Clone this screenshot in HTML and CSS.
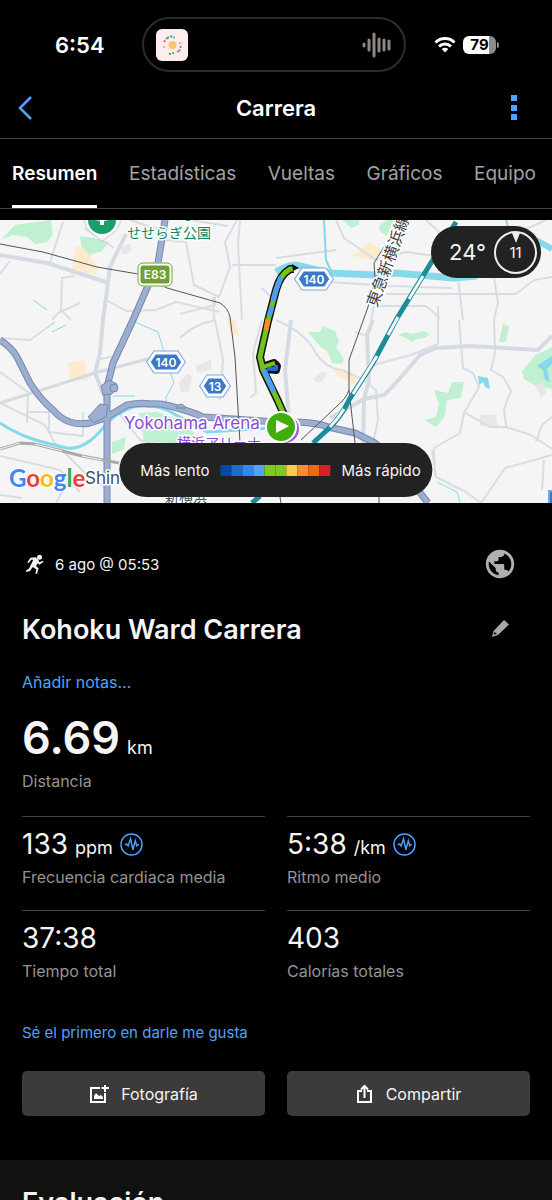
FILE: index.html
```html
<!DOCTYPE html>
<html lang="es">
<head>
    <meta charset="UTF-8">
    <meta name="viewport" content="width=device-width, initial-scale=1.0">
    <title>Carrera</title>
    <link rel="stylesheet" href="styles.css">
</head>
<body>
    <div class="app">
        <!-- Status bar -->
        <div class="status-bar">
            <span class="time">6:54</span>
            <div class="island">
                <svg class="app-icon" viewBox="0 0 32 32">
                    <rect width="32" height="32" rx="6" fill="#fdeeed"/>
                    <circle cx="16.500" cy="16" r="4" fill="#f9c56a"/>
                    <g fill="none" stroke-width="2" stroke-dasharray="2 1.500">
                        <path d="M8 13l3-4" stroke="#c0705c"/>
                        <path d="M11 9l5-2" stroke="#3f9d93"/>
                        <path d="M17 9l3-2" stroke="#59b6de"/>
                        <path d="M23 14h4" stroke="#ef9fc0"/>
                        <path d="M25 17l-2 6" stroke="#50a3b5"/>
                        <path d="M21 22l3 2" stroke="#d5764e"/>
                        <path d="M13 25l5-1" stroke="#3d9b78"/>
                        <path d="M7 18h3" stroke="#efa6b8"/>
                    </g>
                </svg>
                <svg class="wave" viewBox="0 0 30 26" stroke="#8f8783" stroke-width="3" stroke-linecap="round">
                    <path d="M2 12v2M7 8v10M12 2v22M17 7v12M22 8v10M27 9v8"/>
                </svg>
            </div>
            <div class="indicators">
                <svg class="wifi" viewBox="0 0 22 17">
                    <g fill="none" stroke="#fff" stroke-width="3">
                        <path d="M1.500 6.500a13.500 13.500 0 0 1 19 0"/>
                        <path d="M5 10.500a8.500 8.500 0 0 1 12 0"/>
                    </g>
                    <path d="M7.800 13a4.600 4.600 0 0 1 6.400 0L11 16.500z" fill="#fff"/>
                </svg>
                <span class="battery">79</span>
            </div>
        </div>

        <header class="header">
            <button class="icon-btn" aria-label="Volver">
                <svg width="16" height="24" viewBox="0 0 16 24"><path d="M13 1L2 12l11 11" fill="none" stroke="#4da3ff" stroke-width="2.500"/></svg>
            </button>
            <h1>Carrera</h1>
            <button class="icon-btn" aria-label="Más opciones">
                <svg width="6" height="26" viewBox="0 0 6 26" fill="#4da3ff"><path d="M0 0h6v6H0zM0 10h6v6H0zM0 19h6v6H0z"/></svg>
            </button>
        </header>

        <nav class="tabs">
            <a href="#" class="active">Resumen</a>
            <a href="#">Estadísticas</a>
            <a href="#">Vueltas</a>
            <a href="#">Gráficos</a>
            <a href="#">Equipo</a>
        </nav>

        <main>
            <!-- Route map -->
            <div class="map">
                <svg class="map-canvas" viewBox="0 0 552 283" preserveAspectRatio="xMidYMid slice">
                    <rect width="552" height="283" fill="#f5f5f6"/>

                    <!-- parks and built-up areas -->
                    <g fill="#bff0d2">
                        <path d="M1 20l14-15 14-2 22-3 2 14-6 8-12 2-8-7-14-2z"/>
                        <path d="M80 16l14 2 15 4-8 10-10 2-2 8-6-4z"/>
                        <path d="M139 193l18-1 24 9 13 12-4 12-46-4z"/>
                        <path d="M112 222l14-5-2 12-12 5z"/>
                        <path d="M308 112l12 0 3-6 12 5 4 10-3 6 8 12-2 5-10-1-4-11-8-6z"/>
                        <path d="M398 115l8-3 6 2 12-3 6 3-6 4-8 1-4 3-6-4z"/>
                        <path d="M343 0h16l0 5-8 3zM379 6l8-6h6l-6 16-7-5z"/>
                        <path d="M503 104l6 2-3 16-7 0z"/>
                        <path d="M522 151l14-16 16-8v42l-18-4-10-6z"/>
                        <path d="M434 170l14 3 4-11 12 0-3 16-14 2-2 16-9 11-12-7 12-3 3-13z"/>
                    </g>
                    <g fill="#fbeacc">
                        <path d="M76 26l9 3 13 18-2 8-24-6z"/>
                        <path d="M68 143l16-3 4 20-18 1z"/>
                        <path d="M352 36l18-13 13 7-10 10z"/>
                        <path d="M332 150l23 3 2 14-14-8z"/>
                        <path d="M226 96l9 4 4 16-9-4z"/>
                    </g>
                    <g fill="#e9e6e8">
                        <path d="M121 27l10-4 0 9-8 3zM179 162l8-8 5 3-3 14-8 2zM196 146l15-6v9l-14 4zM313 160l9-9 6 3-8 9zM480 195l16 0 2 11h-18zM535 166l8-4 4 11-6 4z"/>
                    </g>

                    <!-- streets -->
                    <g fill="none" stroke="#d8dde4" stroke-width="2" stroke-linejoin="round">
                        <path d="M63 2L50 42M0 54l10-13M75 56l-13 2-1 32 10 10M80 83l-22 10-6 7M108 81l18 10 30-1 20-8 44 10"/>
                        <path d="M164 20l22 2 8 43 25 12 11-30-5-25 13-24M240 0l-2 25 4 75M232 45h44M130 0l30 10M84 8l30 20"/>
                        <path d="M0 183l45 22 10 18 35 35 17 10M27 203V192h22v20l34 4v-24M0 236l60 14 20 22M70 257l-14 26M0 275l22 3"/>
                        <path d="M0 118l30 2 25-18M0 152l28 20-1 30M180 118q14-14 36-18M262 100l-9 33 3 40 -6 5M215 100l8 40-3 40M118 192l22 28 50 12"/>
                        <path d="M336 0l8 18 32 22 30-8 30 4M276 38l60-8M330 62l60 4 62 2M376 72l-5 30M376 86h50l14 12M386 74h130l18-14 18-3M426 0l38 35M438 86v14M458 58l5 42M494 57l4 26-4 17"/>
                        <path d="M276 100q28 12 38 30t28 20l22 10 12 10 2 30-5 23M355 112l12 4M459 100l4 48 10 5 6 14-15 26-4 20-26 15 1 27M464 192l26 15 16 0 25 8 21 14M494 100l1 32-4 18 12 7 8 14-7 18 2 17M432 230l4 27 30 15 15 11M481 283l24-35 36-10 11-3M536 222l6-17 10-8M544 240l-2 30M373 145l38-10 27-11v-24"/>
                        <path d="M215 77v8l-35 9M213 77l1 23M120 135l-20 4M262 68l12 12-2 14M190 0l38 6M546 0l-22 10"/>
                    </g>
                    <g fill="none" stroke="#d5dbe2" stroke-width="4" stroke-linejoin="round">
                        <path d="M0 35l47 8 59 19M126 14l-16 33-3 23-4 30-3 33-5 20 12 30"/>
                        <path d="M0 183l95-30 60-16" stroke-width="3"/>
                        <path d="M330 198l34-19 20-4 12-12 24-28 16-7 34-2 35 2 33 2 14-14M364 179l-1 44M373 100l-6 15 2 45-5 19M291 100l-6 50 4 50"/>
                    </g>

                    <!-- water -->
                    <g fill="none" stroke="#86d9ea">
                        <path d="M0 203q14 9 27 14t40 11q18 2 36-20 10-14 30-21 20-3 34 3l40 22q30-2 65-4" stroke-width="3"/>
                        <path d="M276 52q12-7 20-7l33 8 47 2 20-2 57 5 24-2" stroke-width="7"/>
                        <path d="M536 20l16 9" stroke-width="6"/>
                        <path d="M324 0l2 40 6 13M506 0l3 10" stroke-width="2"/>
                        <path d="M130 100l28 12 10 33 6 18-8 14 1 14M113 176h22M33 80l14 10M52 112l14-7M437 262l20 10 3 11" stroke-width="1"/>
                    </g>
                    <path d="M478 156l10 2 2 11-5-2-2-5-4 3zM537 146l15-10v8l-5 5 3 13-5-2-2-10z" fill="#86d9ea"/>

                    <!-- expressways -->
                    <g fill="none" stroke-linejoin="round">
                        <path d="M165 0l-7 43-25 57-20 43-6 24v116M0 120q12 8 17 17l13 26q10 16 23 27 8 9 17 12 10 3 20 1 10-3 17-6l20-12q15-3 23-1 9-1 20 2 20 5 33 11l74 5h21q20 1 30 5l27 6 20 10q20 14 33 34l20 26" stroke="#7489b2" stroke-width="7"/>
                        <path d="M165 0l-7 43-25 57-20 43-6 24v116M0 120q12 8 17 17l13 26q10 16 23 27 8 9 17 12 10 3 20 1 10-3 17-6l20-12q15-3 23-1 9-1 20 2 20 5 33 11l74 5h21q20 1 30 5l27 6 20 10q20 14 33 34l20 26" stroke="#9daecf" stroke-width="5"/>
                    </g>
                    <g fill="#9daecf" stroke="#7489b2">
                        <path d="M88 197l12-13 8 1-2 12-12 6zM101 166l8-6 8 4-5 10-9 1z"/>
                        <circle cx="114" cy="168" r="4"/>
                        <path d="M176 188q5-8 10 0z"/>
                    </g>

                    <!-- railways -->
                    <g fill="none" stroke="#555">
                        <path d="M0 24l43 8 54 15 41 7 29 14 53 15q8 5 10 14l5 40 5 86M384 27l-10 16 1 15-7 29-19 53v30q-3 9-13 17l-35 33M349 170l6 53M280 277l1 6M379 277v6"/>
                        <path d="M0 229l20-6 15 1 47 12 37 7" stroke="#aaa" stroke-width="3"/>
                        <path d="M0 229l20-6M35 224l27 7M82 236l20 4" stroke="#f5f5f6"/>
                    </g>
                    <path d="M456 2l-60 98-23 43-24 37q-8 18-23 31l-13 12M260 276l-8 7" fill="none" stroke="#1b8c99" stroke-width="5"/>
                    <path d="M423 56l-14 23M398 97l-10 18M377 136l-24 38M344 189q-6 10-14 18" fill="none" stroke="#f5f5f6" stroke-width="3"/>

                    <!-- place names -->
                    <path d="M102 21l-10-8a18 18 0 1 1 21 0z" fill="#fff" stroke="#c4c8cb"/>
                    <circle cx="102" cy="0" r="14" fill="#17a06b"/>
                    <path d="M95 0l7-7 7 7-5 1v4h-4V1z" fill="#fff"/>
                    <g class="place">
                        <text x="184" y="-2" class="park">g</text>
                        <text x="127" y="18" class="park">せせらぎ公園</text>
                        <text x="124" y="209" class="arena">Yokohama Arena</text>
                        <text x="177" y="228" class="arena-jp">横浜アリーナ</text>
                        <text transform="translate(377 88) rotate(-70)" class="line-name">東急新横浜線</text>
                        <text x="85" y="264" class="station">Shin</text>
                        <text x="165" y="282" class="station-jp">新横浜</text>
                    </g>

                    <!-- road shields -->
                    <rect x="139" y="44" width="32" height="21" rx="4" fill="#6fa037" stroke="#fff" stroke-width="3"/>
                    <rect x="138" y="43" width="34" height="23" rx="5" fill="none" stroke="#6fa037"/>
                    <g fill="#3c78c8" stroke="#3c78c8">
                        <path d="M303 50h22l6 9-6 9h-22l-6-9z" stroke="#7da5dd" stroke-width="5"/>
                        <path d="M303 50h22l6 9-6 9h-22l-6-9z" stroke="#fff" stroke-width="3"/>
                        <path d="M155 133h22l6 9-6 9h-22l-6-9z" stroke="#7da5dd" stroke-width="5"/>
                        <path d="M155 133h22l6 9-6 9h-22l-6-9z" stroke="#fff" stroke-width="3"/>
                        <path d="M208 157h14l6 9-6 9h-14l-6-9z" stroke="#7da5dd" stroke-width="5"/>
                        <path d="M208 157h14l6 9-6 9h-14l-6-9z" stroke="#fff" stroke-width="3"/>
                        <path d="M549 271h8v14h-8z" stroke="#7da5dd" stroke-width="2"/>
                    </g>
                    <g class="shield-text">
                        <text x="155" y="59">E83</text>
                        <text x="314" y="64">140</text>
                        <text x="166" y="147">140</text>
                        <text x="215" y="171">13</text>
                    </g>

                    <!-- run track, coloured by pace -->
                    <g fill="none" stroke-linejoin="round">
                        <path d="M294 49l-4 0q-10 6-14 21l-8 31-8 36 3 13 15 31 7 16M263 149l2-3 9-3 3 3-1 4-9-1" stroke="#111" stroke-width="8"/>
                        <path d="M294 49l-4 0q-10 6-14 21l-8 31-8 36 3 13 15 31 7 16" stroke="#72c31c" stroke-width="5"/>
                        <path d="M281 57l-5 13-3 11M272 87l-3 9M264 150l10 22" stroke="#4c9dfa" stroke-width="5"/>
                        <path d="M268 99l-2 11" stroke="#fb8a26" stroke-width="5"/>
                        <path d="M263 147l12-4" stroke="#72c31c" stroke-width="4"/>
                        <path d="M276 145l0 4-9 0" stroke="#236dcb" stroke-width="4"/>
                    </g>
                    <path d="M292 44l7 4-6 3z" fill="#111"/>
                    <circle cx="285" cy="209" r="15" fill="#a15cf0" stroke="#fff" stroke-width="2"/>
                    <circle cx="281" cy="207" r="15" fill="#43ad0b" stroke="#fff" stroke-width="2"/>
                    <path d="M276 200v13l13-7z" fill="#fff"/>

                    <text x="9" y="267" class="google"><tspan fill="#4285f4">G</tspan><tspan fill="#ea4335">o</tspan><tspan fill="#fbbc05">o</tspan><tspan fill="#4285f4">g</tspan><tspan fill="#34a853">l</tspan><tspan fill="#ea4335">e</tspan></text>
                </svg>

                <div class="weather">
                    <span>24°</span>
                    <span class="wind">11</span>
                </div>

                <div class="legend">
                    <span>Más lento</span>
                    <div class="pace-scale">
                        <i class="p1"></i><i class="p2"></i><i class="p3"></i><i class="p4"></i><i class="p5"></i>
                        <i class="p5"></i><i class="p6"></i><i class="p7"></i><i class="p8"></i><i class="p9"></i>
                    </div>
                    <span>Más rápido</span>
                </div>
            </div>

            <!-- Activity summary -->
            <section class="summary">
                <div class="row">
                    <div class="date">
                        <svg width="19" height="20" viewBox="2 0 22 24" fill="#f2f2f2"><circle cx="19" cy="4" r="3"/><path d="M8 4.500L14.500 4l3 2.500 1.500 3.500 4-2 .8 1.500-5 3.500-2-2-2 3.500 3.200 3-2 6.500-2-.5 1.200-5-4.200-3-3.500 4.800L3 21.500 2.500 20l4-2.500 5-10.500H9l-3 4-1.500-1z"/></svg>
                        <span>6 ago @ 05:53</span>
                    </div>
                    <button class="icon-btn" aria-label="Privacidad">
                        <svg width="34" height="34" viewBox="0 0 24 24" fill="#b0b0b0"><path d="M12 2C6.480 2 2 6.480 2 12s4.480 10 10 10 10-4.480 10-10S17.520 2 12 2zm-1 17.930c-3.950-.490-7-3.850-7-7.930 0-.620.080-1.210.210-1.790L9 15v1c0 1.100.900 2 2 2v1.930zm6.900-2.540c-.260-.810-1-1.390-1.900-1.390h-1v-3c0-.550-.450-1-1-1H8v-2h2c.550 0 1-.450 1-1V7h2c1.100 0 2-.900 2-2v-.410c2.930 1.190 5 4.060 5 7.410 0 2.080-.800 3.970-2.100 5.390z"/></svg>
                    </button>
                </div>
                <div class="row title-row">
                    <h2>Kohoku Ward Carrera</h2>
                    <button class="icon-btn" aria-label="Editar">
                        <svg width="34" height="24" viewBox="-8 0 34 24"><path d="M1 20l1.500-6L13 3l5 4.500L7 18z" fill="#a8a8a8"/><path d="M2.500 17.500l1-2.500 2.500 2z" fill="#000"/></svg>
                    </button>
                </div>
                <a href="#" class="notes">Añadir notas...</a>

                <p class="distance">6.69 <small>km</small></p>
                <p class="caption">Distancia</p>

                <div class="stats">
                    <div class="stat">
                        <p class="value">133 <small>ppm</small>
                            <svg class="chart-icon" viewBox="0 0 24 24"><circle cx="12" cy="12" r="11"/><path d="M5 12.500l2-1 1.500 2L11 6l2.500 11.500L16 8l1.500 5.500 2-2"/></svg>
                        </p>
                        <p class="caption">Frecuencia cardiaca media</p>
                    </div>
                    <div class="stat">
                        <p class="value">5:38 <small>/km</small>
                            <svg class="chart-icon" viewBox="0 0 24 24"><circle cx="12" cy="12" r="11"/><path d="M5 12.500l2-1 1.500 2L11 6l2.500 11.500L16 8l1.500 5.500 2-2"/></svg>
                        </p>
                        <p class="caption">Ritmo medio</p>
                    </div>
                    <div class="stat">
                        <p class="value">37:38</p>
                        <p class="caption">Tiempo total</p>
                    </div>
                    <div class="stat">
                        <p class="value">403</p>
                        <p class="caption">Calorías totales</p>
                    </div>
                </div>

                <a href="#" class="likes">Sé el primero en darle me gusta</a>

                <div class="actions">
                    <button class="action">
                        <svg width="20" height="20" viewBox="0 0 20 20"><path d="M11 4H2v14h14V9M16 1v7M12.500 4H20" fill="none" stroke="#fff" stroke-width="2"/><path d="M5 15v-3l2-3 3 3 2-1 2 2v2z" fill="#fff"/></svg>
                        <span>Fotografía</span>
                    </button>
                    <button class="action">
                        <svg width="18" height="20" viewBox="0 0 18 20"><path d="M6 7H2v11h13V7h-4M8.500 14V2M5 5.500L8.500 2 12 5.500" fill="none" stroke="#fff" stroke-width="2"/></svg>
                        <span>Compartir</span>
                    </button>
                </div>
            </section>

            <section class="evaluation">
                <h2>Evaluación</h2>
            </section>
        </main>
    </div>
</body>
</html>
```
FILE: styles.css
```css
* {
    box-sizing: border-box;
    margin: 0;
    padding: 0;
}
body {
    font-family: Inter, "Noto Sans CJK JP", sans-serif;
    background: #000;
    color: #f5f5f5;
}
a {
    text-decoration: none;
}
svg {
    display: block;
}
.app {
    display: flex;
    flex-direction: column;
    height: 100vh;
}
.icon-btn {
    background: none;
    border: none;
    cursor: pointer;
}

/* Status bar */
.status-bar {
    display: grid;
    grid-template-columns: 1fr 264px 1fr;
    align-items: center;
    padding: 17px 4px 7px 0;
    color: #fff;
}
.time {
    padding-left: 55px;
    font-size: 22px;
    font-weight: 600;
}
.island {
    display: flex;
    justify-content: space-between;
    align-items: center;
    height: 55px;
    padding: 0 12px;
    border: 2px solid #2b2b2b;
    border-radius: 28px;
}
.app-icon {
    width: 32px;
    height: 32px;
}
.wave {
    width: 30px;
    height: 26px;
}
.indicators {
    display: flex;
    align-items: center;
    gap: 7px;
    padding-left: 28px;
}
.wifi {
    width: 22px;
    height: 17px;
}
.battery {
    position: relative;
    width: 33px;
    height: 18px;
    border-radius: 6px;
    background: linear-gradient(to right, #fff 79%, #8b8b8b 79%);
    color: #000;
    font-size: 15px;
    font-weight: 700;
    line-height: 18px;
    text-align: center;
}
.battery::after {
    content: "";
    position: absolute;
    right: -3px;
    top: 6px;
    width: 2px;
    height: 6px;
    border-radius: 0 2px 2px 0;
    background: #8b8b8b;
}

/* Header and tabs */
.header {
    display: flex;
    justify-content: space-between;
    align-items: center;
    height: 60px;
    padding: 0 35px 2px 18px;
    border-bottom: 1px solid #444;
}
.header h1 {
    padding-left: 7px;
    font-size: 22px;
    font-weight: 600;
    color: #fff;
}
.tabs {
    display: flex;
    justify-content: space-between;
    padding: 0 16px 0 12px;
    border-bottom: 1px solid #444;
    margin-bottom: 11px;
}
.tabs a {
    height: 69px;
    font-size: 19px;
    line-height: 70px;
    color: #a2a2a2;
}
.tabs .active {
    border-bottom: 3px solid #fff;
    color: #fff;
    font-weight: 600;
}
main {
    flex: 1;
    overflow-y: auto;
    scrollbar-width: none;
}

/* Map */
.map {
    position: relative;
}
.map-canvas {
    width: 100%;
    height: 283px;
}
.place text {
    paint-order: stroke;
    stroke: #fff;
    stroke-width: 3px;
    stroke-linejoin: round;
}
.park {
    font-size: 14px;
    fill: #168466;
}
.arena {
    font-size: 17px;
    fill: #8b4bd8;
}
.arena-jp {
    font-size: 14px;
    fill: #8b4bd8;
}
.line-name {
    font-size: 16px;
    fill: #444;
}
.station {
    font-size: 17px;
    fill: #3c4d5c;
}
.station-jp {
    font-size: 14px;
    fill: #3c4d5c;
}
.shield-text {
    font-size: 12px;
    font-weight: 600;
    fill: #fff;
    text-anchor: middle;
}
.google {
    font-family: Lato, sans-serif;
    font-size: 24px;
    font-weight: 700;
    paint-order: stroke;
    stroke: #fff;
    stroke-width: 2px;
}
.weather {
    position: absolute;
    top: 6px;
    right: 11px;
    display: flex;
    align-items: center;
    gap: 8px;
    height: 52px;
    padding: 0 4px 0 18px;
    border-radius: 26px;
    background: #222;
    font-size: 22px;
}
.wind {
    position: relative;
    width: 43px;
    height: 43px;
    border: 2px solid #eee;
    border-radius: 50%;
    font-size: 15px;
    line-height: 40px;
    text-align: center;
}
.wind::before {
    content: "";
    position: absolute;
    top: 0;
    left: 16px;
    border: 4px solid transparent;
    border-top: 10px solid #eee;
    border-bottom: 0;
}
.legend {
    position: absolute;
    bottom: 6px;
    left: 50%;
    transform: translateX(-50%);
    display: flex;
    align-items: center;
    gap: 11px;
    height: 54px;
    padding: 0 12px 0 21px;
    border-radius: 27px;
    background: #222;
    font-size: 15px;
    white-space: nowrap;
}
.pace-scale {
    display: flex;
}
.pace-scale i {
    width: 11px;
    height: 11px;
}
.p1 { background: #0649a5; }
.p2 { background: #1d6dce; }
.p3 { background: #3188f2; }
.p4 { background: #52a2ff; }
.p5 { background: #7ccb1d; }
.p6 { background: #ffcb4c; }
.p7 { background: #ff8a27; }
.p8 { background: #f3680d; }
.p9 { background: #d92025; }

/* Summary */
.summary {
    padding: 43px 22px 44px;
}
.row {
    display: flex;
    justify-content: space-between;
    align-items: center;
    height: 36px;
}
.date {
    display: flex;
    align-items: center;
    gap: 11px;
    padding-left: 3px;
    font-size: 15px;
}
.row .icon-btn {
    margin-right: 13px;
}
.title-row {
    margin-top: 29px;
}
h2 {
    font-size: 27px;
    font-weight: 600;
}
.notes,
.likes {
    display: block;
    color: #4da3ff;
    font-size: 15px;
    line-height: 24px;
}
.notes {
    margin: 23px 0 16px;
    font-size: 16px;
}
.distance,
.value {
    display: flex;
    align-items: baseline;
    gap: 7px;
}
.distance {
    font-size: 45px;
    font-weight: 600;
    line-height: 56px;
}
.distance small,
.value small {
    font-size: 18px;
    font-weight: 400;
    line-height: 24px;
}
.caption {
    margin-top: 3px;
    color: #949494;
    font-size: 16px;
    line-height: 24px;
}
.stats {
    display: grid;
    grid-template-columns: 1fr 1fr;
    column-gap: 22px;
    margin-top: 23px;
}
.stat {
    padding: 9px 0 21px;
    border-top: 1px solid #444;
}
.value {
    font-size: 28px;
    line-height: 36px;
}
.chart-icon {
    align-self: center;
    width: 23px;
    height: 23px;
    fill: none;
    stroke: #4da3ff;
    stroke-width: 1.5;
}
.likes {
    margin: 17px 0 26px;
}
.actions {
    display: grid;
    grid-template-columns: 1fr 1fr;
    gap: 22px;
}
.action {
    display: flex;
    justify-content: center;
    align-items: center;
    gap: 12px;
    height: 45px;
    border: none;
    border-radius: 5px;
    background: #3b3b3b;
    color: #f5f5f5;
    font-family: inherit;
    font-size: 16px;
    cursor: pointer;
}
.evaluation {
    padding: 26px 22px;
    background: #111;
}
```
